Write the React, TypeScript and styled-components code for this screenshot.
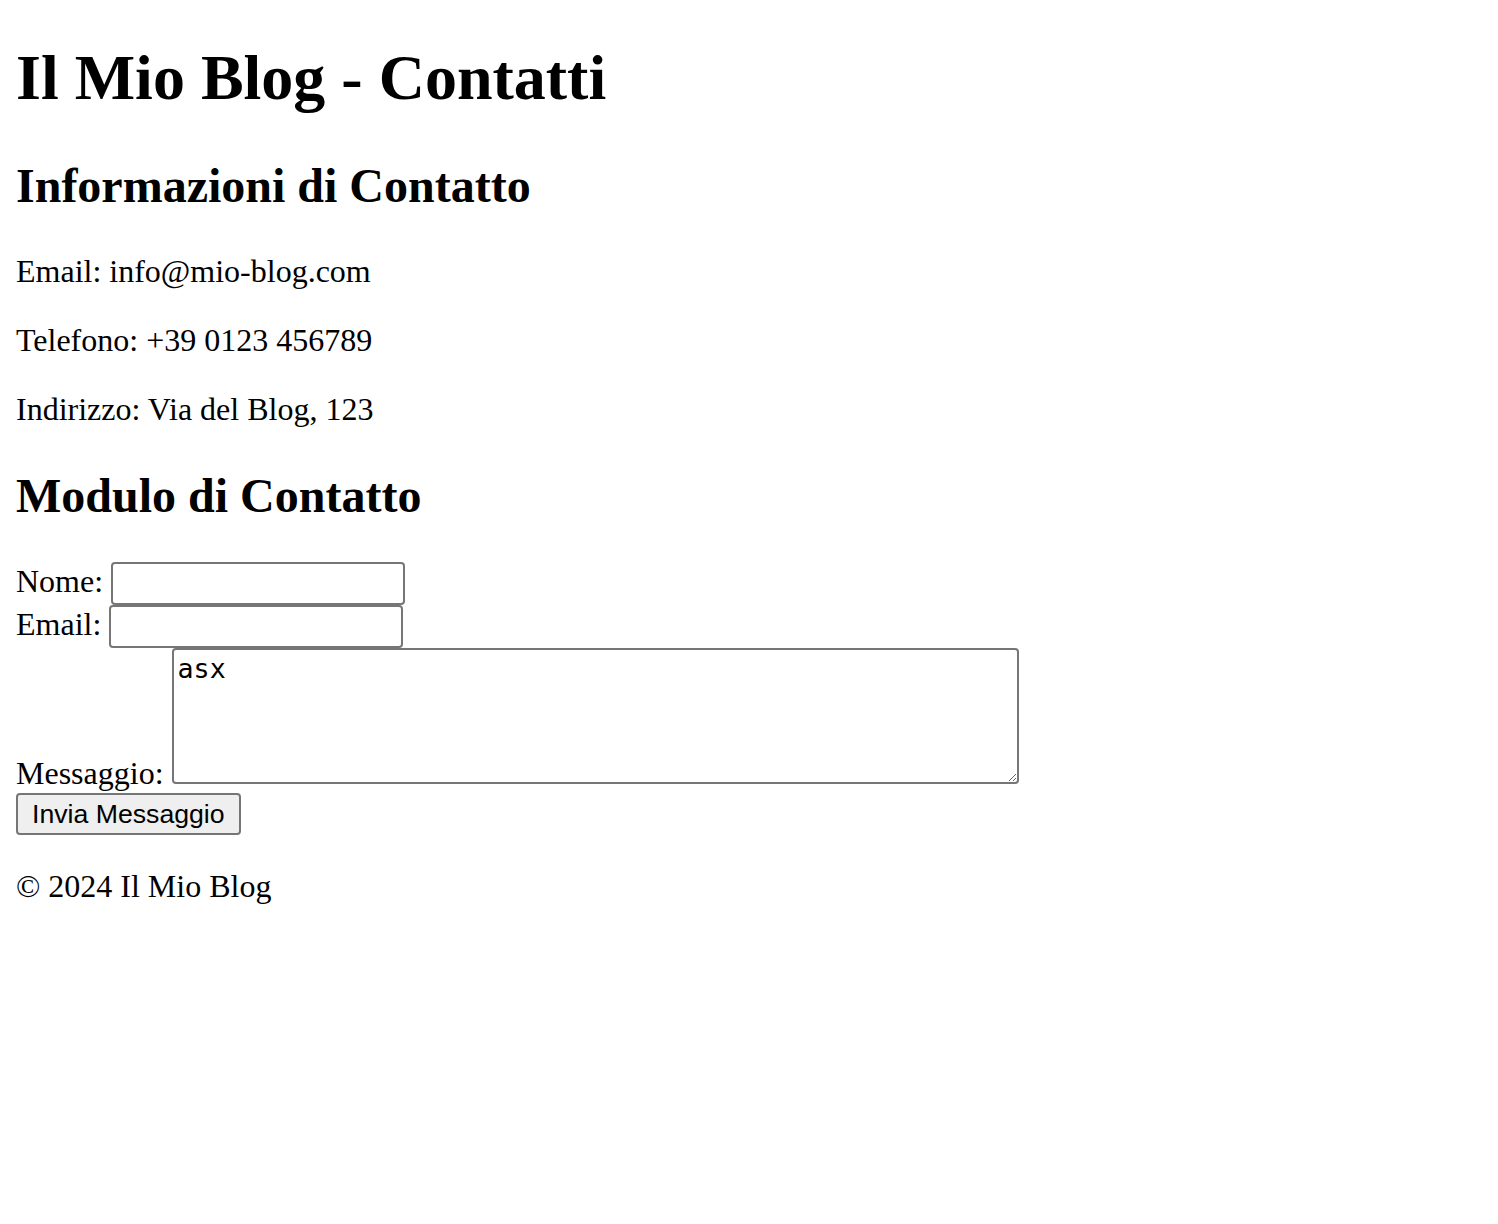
import React from "react";
import styled, { createGlobalStyle } from "styled-components";

const GlobalStyle = createGlobalStyle`
  html, body { background: #ffffff; }
  body {
    margin: 0;
    padding: 0 16px 16px;
    font-family: "Liberation Serif", "Times New Roman", serif;
    font-size: 32px;
    color: #000000;
  }
`;

const Header = styled.header``;

const Title = styled.h1`
  font-size: 64px;
  font-weight: bold;
  margin: 41px 0 42.88px;
`;

const Main = styled.main``;

const Section = styled.section``;

const SectionTitle = styled.h2`
  font-size: 48px;
  font-weight: bold;
  margin: 39.84px 0;
`;

const Paragraph = styled.p<{ $top?: number }>`
  margin: ${(p) => (p.$top ?? 32)}px 0 32px;
`;

const Form = styled.form`
  margin: 0;
`;

const Label = styled.label``;

const controlBase = `
  box-sizing: border-box;
  border: 2px solid #767676;
  border-radius: 4px;
  background: #ffffff;
  color: #000000;
  margin: 0;
  outline: none;
`;

const TextInput = styled.input`
  ${controlBase}
  width: 294px;
  height: 43px;
  padding: 2px 4px;
  font-family: "Liberation Sans", Arial, sans-serif;
  font-size: 26.67px;
`;

const TextArea = styled.textarea`
  ${controlBase}
  width: 847px;
  height: 136px;
  padding: 4px;
  font-family: "DejaVu Sans Mono", "Liberation Mono", monospace;
  font-size: 26.67px;
  line-height: 1.15;
  resize: both;
  vertical-align: baseline;
`;

const SubmitButton = styled.button`
  box-sizing: border-box;
  height: 42px;
  padding: 0 14px;
  margin: 1px 0 0;
  border: 2px solid #767676;
  border-radius: 4px;
  background: #efefef;
  color: #000000;
  font-family: "Liberation Sans", Arial, sans-serif;
  font-size: 26.67px;
  line-height: 1;
`;

const Footer = styled.footer``;

export default function App() {
  return (
    <>
      <GlobalStyle />
      <Header>
        <Title>Il Mio Blog - Contatti</Title>
      </Header>
      <Main>
        <Section>
          <SectionTitle>Informazioni di Contatto</SectionTitle>
          <Paragraph>Email: info@mio-blog.com</Paragraph>
          <Paragraph>Telefono: +39 0123 456789</Paragraph>
          <Paragraph>Indirizzo: Via del Blog, 123</Paragraph>
        </Section>
        <Section>
          <SectionTitle>Modulo di Contatto</SectionTitle>
          <Form onSubmit={(e) => e.preventDefault()}>
            <Label htmlFor="nome">Nome:</Label> <TextInput id="nome" type="text" />
            <br />
            <Label htmlFor="email">Email:</Label> <TextInput id="email" type="email" />
            <br />
            <Label htmlFor="messaggio">Messaggio:</Label>{" "}
            <TextArea id="messaggio" defaultValue="asx" />
            <br />
            <SubmitButton type="submit">Invia Messaggio</SubmitButton>
          </Form>
        </Section>
      </Main>
      <Footer>
        <Paragraph $top={33}>© 2024 Il Mio Blog</Paragraph>
      </Footer>
    </>
  );
}
